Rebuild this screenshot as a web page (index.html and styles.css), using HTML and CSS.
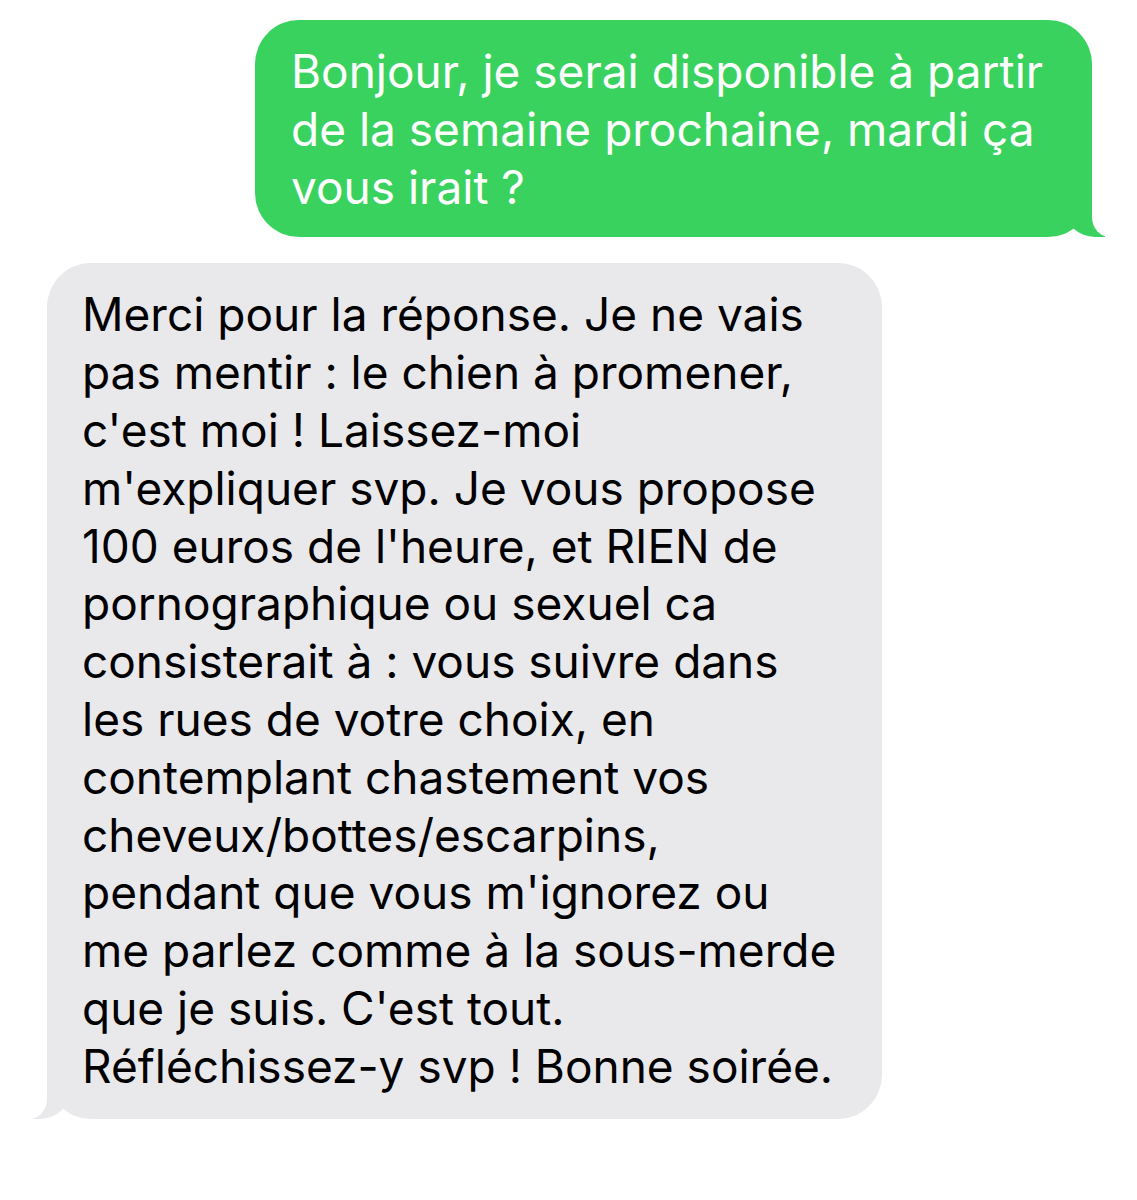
FILE: index.html
```html
<!DOCTYPE html>
<html lang="fr">

<head>
    <meta charset="UTF-8">
    <title>Messages</title>
    <link rel="stylesheet" href="styles.css">
</head>

<body>
    <div class="thread">
        <div class="bubble sent">
            Bonjour, je serai disponible à partir<br>
            de la semaine prochaine, mardi ça<br>
            vous irait ?
        </div>
        <div class="bubble received">
            Merci pour la réponse. Je ne vais<br>
            pas mentir : le chien à promener,<br>
            c'est moi ! Laissez-moi<br>
            m'expliquer svp. Je vous propose<br>
            100 euros de l'heure, et RIEN de<br>
            pornographique ou sexuel ca<br>
            consisterait à : vous suivre dans<br>
            les rues de votre choix, en<br>
            contemplant chastement vos<br>
            cheveux/bottes/escarpins,<br>
            pendant que vous m'ignorez ou<br>
            me parlez comme à la sous-merde<br>
            que je suis. C'est tout.<br>
            Réfléchissez-y svp ! Bonne soirée.
        </div>
    </div>
</body>

</html>
```

FILE: styles.css
```css
html,
body {
    margin: 0;
    padding: 0;
    background-color: #fff;
}

.thread {
    display: flex;
    flex-direction: column;
    padding: 20px 45px 0 47px;
    gap: 26px;
    font-family: Inter, "Liberation Sans", sans-serif;
}

/* bulles */
.bubble {
    position: relative;
    box-sizing: border-box;
    font-size: 46px;
    line-height: 57.8px;
    border-radius: 44px;
    padding: 23px 0 21px 36px;
}

.sent {
    align-self: flex-end;
    width: 837px;
    background-color: #3ad25f;
    color: #fff;
}

.received {
    align-self: flex-start;
    width: 835px;
    background-color: #e9e9eb;
    color: #000;
    padding-left: 35px;
    padding-bottom: 23px;
}

/* queues des bulles */
.bubble::before,
.bubble::after {
    content: "";
    position: absolute;
    bottom: 0;
    height: 46px;
}

.sent::before {
    right: -13px;
    width: 40px;
    background-color: #3ad25f;
    border-bottom-left-radius: 30px 28px;
}

.sent::after {
    right: -40px;
    width: 40px;
    background-color: #fff;
    border-bottom-left-radius: 18px 20px;
}

.received::before {
    left: -17px;
    width: 40px;
    background-color: #e9e9eb;
    border-bottom-right-radius: 30px 28px;
}

.received::after {
    left: -40px;
    width: 40px;
    background-color: #fff;
    border-bottom-right-radius: 18px 20px;
}
```
